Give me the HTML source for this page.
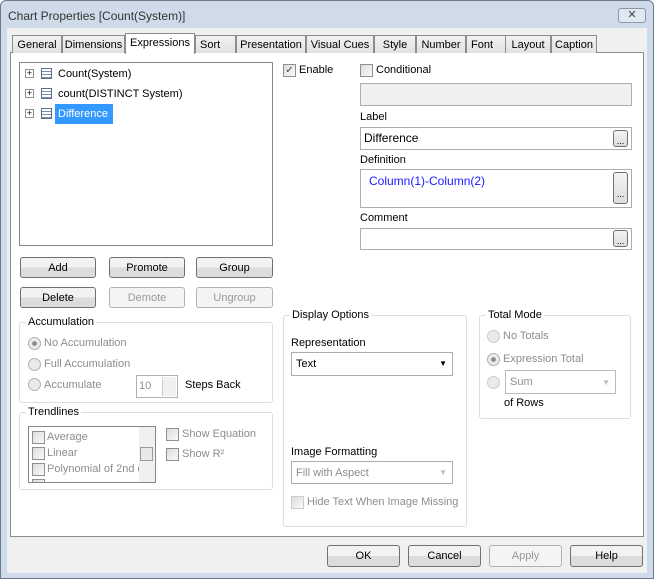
<!DOCTYPE html>
<html><head><style>
*{box-sizing:border-box}
body{margin:0;width:654px;height:579px;overflow:hidden;font-family:"Liberation Sans",sans-serif;font-size:11px;line-height:16px;color:#000;background:#fff}
.a{position:absolute}
#win{position:absolute;left:0;top:0;width:654px;height:579px;border:1px solid #6b7b8f;background:#cfdbe9;border-radius:6px 6px 0 0}
.tab{position:absolute;top:35px;height:18px;border:1px solid #898c95;border-bottom:none;background:linear-gradient(#f2f2f2,#e1e1e1);text-align:center;line-height:18px;font-size:11px}
.panel{position:absolute;left:10px;top:52px;width:634px;height:485px;background:#fff;border:1px solid #898c95}
.box{position:absolute;background:#fff;border:1px solid #abadb3}
.btn{position:absolute;height:21px;border:1px solid #707070;border-radius:3px;background:linear-gradient(#f2f2f2 50%,#dcdcdc 50%);text-align:center;line-height:20px}
.dis{border-color:#adb2b5;color:#999;background:#f4f4f4}
.grp{position:absolute;border:1px solid #d5dfe5;border-radius:3px}
.gl{position:absolute;top:-9px;left:6px;background:#fff;padding:0 2px}
.cb{position:absolute;width:13px;height:13px;border:1px solid #8f8f8f;background:linear-gradient(135deg,#dcdcdc,#fafafa)}
.rd{position:absolute;width:13px;height:13px;border:1px solid #b0b0b0;border-radius:50%;background:#eaeaea}
.g{color:#8d8d8d}
.dots{position:absolute;width:15px;height:17px;border:1px solid #707070;border-radius:3px;background:linear-gradient(#f4f4f4,#dcdcdc);font-size:9px;text-align:center;line-height:20px}
.ic{position:absolute;width:11px;height:11px;border:1px solid #5a6e8a;background:repeating-linear-gradient(#fff 0 2px,#7f8fa8 2px 3px)}
.pl{position:absolute;width:9px;height:9px;border:1px solid #919191;background:#fff;font-size:9px;line-height:7px;text-align:center}
</style></head><body>
<div id="win">
<div class="a" style="left:7px;top:7px;font-size:12px;color:#333">Chart Properties [Count(System)]</div>
<div class="a" style="left:617px;top:7px;width:28px;height:15px;border:1px solid #8b98aa;border-radius:3px;background:#dfe7f0;text-align:center;font-size:11px;line-height:13px;color:#445">✕</div>
</div>
<div class="a" style="left:7px;top:28px;width:640px;height:545px;background:#f0f0f0"></div>
<div class="panel"></div>
<div class="tab" style="left:12px;width:50px">General</div>
<div class="tab" style="left:62px;width:63px">Dimensions</div>
<div class="tab" style="left:195px;width:41px;text-align:left;padding-left:4px">Sort</div>
<div class="tab" style="left:236px;width:70px">Presentation</div>
<div class="tab" style="left:306px;width:68px">Visual Cues</div>
<div class="tab" style="left:374px;width:42px">Style</div>
<div class="tab" style="left:416px;width:50px">Number</div>
<div class="tab" style="left:466px;width:40px;text-align:left;padding-left:4px">Font</div>
<div class="tab" style="left:505px;width:46px">Layout</div>
<div class="tab" style="left:551px;width:46px">Caption</div>
<div class="tab" style="left:125px;top:33px;height:21px;width:70px;background:#fff;line-height:19px">Expressions</div>

<div class="box" style="left:19px;top:62px;width:254px;height:184px;border-color:#828790"></div>
<div class="pl" style="left:25px;top:69px">+</div><div class="ic" style="left:41px;top:68px"></div><div class="a" style="left:58px;top:66px">Count(System)</div>
<div class="pl" style="left:25px;top:89px">+</div><div class="ic" style="left:41px;top:88px"></div><div class="a" style="left:58px;top:86px">count(DISTINCT System)</div>
<div class="pl" style="left:25px;top:109px">+</div><div class="ic" style="left:41px;top:108px"></div><div class="a" style="left:55px;top:104px;width:58px;height:20px;background:#3399ff;color:#fff;padding:2px 3px">Difference</div>

<div class="btn" style="left:20px;top:257px;width:76px">Add</div>
<div class="btn" style="left:109px;top:257px;width:76px">Promote</div>
<div class="btn" style="left:196px;top:257px;width:77px">Group</div>
<div class="btn" style="left:20px;top:287px;width:76px">Delete</div>
<div class="btn dis" style="left:109px;top:287px;width:76px">Demote</div>
<div class="btn dis" style="left:196px;top:287px;width:77px">Ungroup</div>

<div class="grp" style="left:19px;top:322px;width:254px;height:81px"><div class="gl">Accumulation</div></div>
<div class="rd" style="left:28px;top:337px;background:radial-gradient(#888 25%,#eaeaea 35%)"></div><div class="a g" style="left:44px;top:335px">No Accumulation</div>
<div class="rd" style="left:28px;top:358px"></div><div class="a g" style="left:44px;top:356px">Full Accumulation</div>
<div class="rd" style="left:28px;top:378px"></div><div class="a g" style="left:44px;top:377px">Accumulate</div>
<div class="a" style="left:136px;top:375px;width:42px;height:23px;border:1px solid #b0b0b0;background:#fff;padding:2px 2px" ><span class="g">10</span></div>
<div class="a" style="left:162px;top:377px;width:14px;height:19px;border-left:1px solid #ccc;background:#f0f0f0"></div>
<div class="a" style="left:185px;top:377px">Steps Back</div>

<div class="grp" style="left:19px;top:412px;width:254px;height:78px"><div class="gl">Trendlines</div></div>
<div class="a" style="left:28px;top:426px;width:128px;height:57px;border:1px solid #828790;background:#fff;overflow:hidden">
<div class="a" style="right:0;top:0;width:16px;height:55px;background:#f0f0f0"></div>
<div class="a" style="right:2px;top:20px;width:13px;height:14px;border:1px solid #999;background:#e8e8e8"></div>
<div class="cb" style="left:3px;top:4px"></div><div class="a g" style="left:18px;top:2px">Average</div>
<div class="cb" style="left:3px;top:20px"></div><div class="a g" style="left:18px;top:18px">Linear</div>
<div class="cb" style="left:3px;top:36px"></div><div class="a g" style="left:18px;top:34px;white-space:nowrap;width:92px;overflow:hidden">Polynomial of 2nd d</div>
<div class="cb" style="left:3px;top:52px"></div>
</div>
<div class="cb" style="left:166px;top:428px"></div><div class="a g" style="left:182px;top:426px">Show Equation</div>
<div class="cb" style="left:166px;top:448px"></div><div class="a g" style="left:182px;top:446px">Show R²</div>

<div class="cb" style="left:283px;top:64px;font-size:10px;line-height:11px;color:#345;text-align:center">✓</div><div class="a" style="left:299px;top:62px">Enable</div>
<div class="cb" style="left:360px;top:64px"></div><div class="a" style="left:376px;top:62px">Conditional</div>
<div class="box" style="left:360px;top:83px;width:272px;height:23px;background:#f0f0f0"></div>
<div class="a" style="left:360px;top:109px">Label</div>
<div class="box" style="left:360px;top:127px;width:272px;height:23px;padding:2px 3px;font-size:12px">Difference</div>
<div class="dots" style="left:613px;top:130px">...</div>
<div class="a" style="left:360px;top:152px">Definition</div>
<div class="box" style="left:360px;top:169px;width:272px;height:39px;padding:3px 8px;font-size:12px;color:#1a1aff">Column(1)-Column(2)</div>
<div class="dots" style="left:613px;top:172px;height:32px;line-height:42px">...</div>
<div class="a" style="left:360px;top:210px">Comment</div>
<div class="box" style="left:360px;top:228px;width:272px;height:22px"></div>
<div class="dots" style="left:613px;top:230px">...</div>

<div class="grp" style="left:283px;top:315px;width:184px;height:212px"><div class="gl">Display Options</div></div>
<div class="a" style="left:291px;top:335px">Representation</div>
<div class="box" style="left:291px;top:352px;width:162px;height:24px;padding:3px 4px">Text<span class="a" style="right:5px;top:3px;font-size:8px">▼</span></div>
<div class="a" style="left:291px;top:444px">Image Formatting</div>
<div class="box" style="left:291px;top:461px;width:162px;height:23px;padding:3px 4px"><span class="g">Fill with Aspect</span><span class="a g" style="right:5px;top:3px;font-size:8px;color:#bbb">▼</span></div>
<div class="cb" style="left:291px;top:496px;border-color:#ccc"></div><div class="a g" style="left:307px;top:494px">Hide Text When Image Missing</div>

<div class="grp" style="left:479px;top:315px;width:152px;height:104px"><div class="gl">Total Mode</div></div>
<div class="rd" style="left:487px;top:330px;border-color:#ccc"></div><div class="a g" style="left:503px;top:328px">No Totals</div>
<div class="rd" style="left:487px;top:353px;background:radial-gradient(#888 25%,#eaeaea 35%)"></div><div class="a g" style="left:503px;top:351px">Expression Total</div>
<div class="rd" style="left:487px;top:376px;border-color:#ccc"></div>
<div class="box" style="left:505px;top:370px;width:111px;height:24px;padding:3px 4px;border-color:#bbb"><span class="g">Sum</span><span class="a" style="right:5px;top:4px;font-size:8px;color:#bbb">▼</span></div>
<div class="a" style="left:504px;top:395px">of Rows</div>

<div class="btn" style="left:327px;top:545px;width:73px;height:22px">OK</div>
<div class="btn" style="left:408px;top:545px;width:73px;height:22px">Cancel</div>
<div class="btn dis" style="left:489px;top:545px;width:73px;height:22px">Apply</div>
<div class="btn" style="left:570px;top:545px;width:73px;height:22px">Help</div>
</body></html>
